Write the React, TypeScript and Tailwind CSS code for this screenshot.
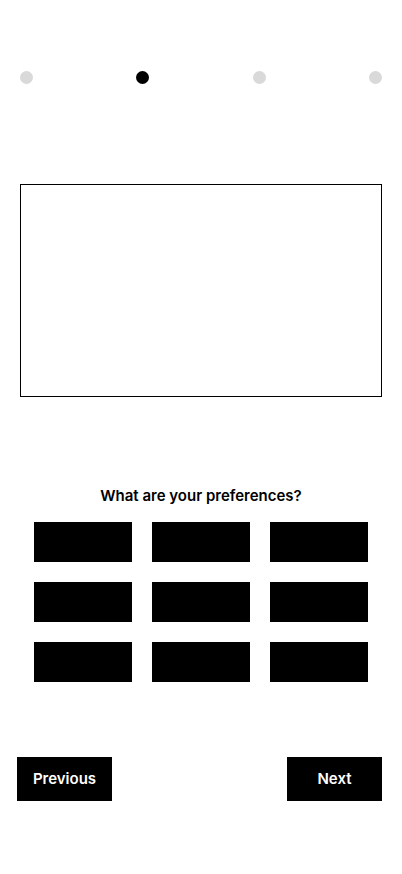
import React from 'react'

const App = () => {
  const steps = [0, 1, 2, 3]
  const active = 1
  const options = Array.from({ length: 9 }, (_, i) => i)

  return (
    <div
      className="min-h-[874px] w-full bg-white"
      style={{ fontFamily: 'Inter, "Liberation Sans", sans-serif' }}
    >
      {/* Step indicator */}
      <div className="flex items-center justify-between px-5 pt-[71px]">
        {steps.map((s) => (
          <span
            key={s}
            className={
              s === active
                ? 'h-[13px] w-[13px] rounded-full bg-black'
                : 'h-[13px] w-[13px] rounded-full bg-[#d9d9d9]'
            }
          />
        ))}
      </div>

      {/* Media placeholder */}
      <div className="mx-5 mt-[100px] h-[213px] border border-black" />

      {/* Preferences */}
      <h2 className="mt-[89px] text-center text-[15px] font-semibold leading-5 text-black">
        What are your preferences?
      </h2>
      <div className="mt-4 grid grid-cols-3 gap-5 px-[34px]">
        {options.map((o) => (
          <button key={o} className="h-10 bg-black" />
        ))}
      </div>

      {/* Navigation */}
      <div className="mt-[75px] flex items-center justify-between pl-[17px] pr-5">
        <button className="h-11 w-[95px] bg-black text-[15px] font-semibold text-white">
          Previous
        </button>
        <button className="h-11 w-[95px] bg-black text-[15px] font-semibold text-white">
          Next
        </button>
      </div>
    </div>
  )
}

export default App
